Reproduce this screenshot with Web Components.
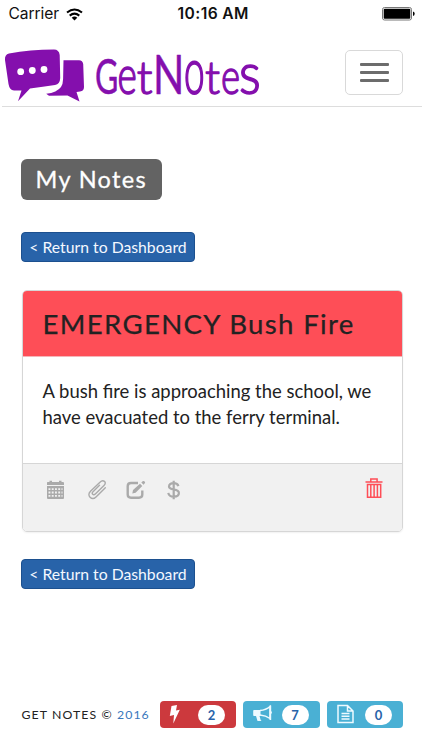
<!DOCTYPE html>
<html lang="en">
<head>
    <meta charset="UTF-8">
    <meta name="viewport" content="width=device-width, initial-scale=1.0">
    <title>GetNotes</title>
    <style>
        :root {
            --purple: #840fad;
            --blue: #2863a9;
            --red: #fe4e57;
            --border: #d6d6d6;
        }
        body {
            margin: 0;
            background: #fff;
            color: #222;
            font-family: Lato, "Liberation Sans", sans-serif;
        }
    </style>
</head>
<body>
    <notes-app></notes-app>

    <template id="status-bar">
        <style>
            :host {
                display: grid;
                grid-template-columns: 1fr auto 1fr;
                align-items: center;
                height: 28px;
                padding: 0 7px 0 8.500px;
                color: #111;
                font: 15.6px/28px Inter, "Liberation Sans", sans-serif;
            }
            .carrier { display: flex; align-items: center; gap: 7px; }
            .name { letter-spacing: -.1px; }
            .time { font-weight: 600; letter-spacing: .4px; position: relative; left: 1.500px; }
            .battery { justify-self: end; }
            svg { display: block; }
        </style>
        <div class="carrier">
            <span class="name"><slot></slot></span>
            <svg width="17" height="13" viewBox="0 0 17 13" fill="none" stroke="#000" stroke-width="2">
                <path d="M1 4.6Q8.500-1.700 16 4.600M3.700 7.600Q8.500 3.700 13.300 7.600"/>
                <path d="M5.700 9.700Q8.500 7.500 11.300 9.700L8.500 12.600Z" fill="#000" stroke="none"/>
            </svg>
        </div>
        <span class="time"><slot name="time"></slot></span>
        <svg class="battery" width="33" height="14" viewBox="0 0 33 14">
            <rect x=".5" y=".5" width="29" height="12.500" rx="2" fill="#fff" stroke="#777"/>
            <rect x="1.700" y="1.700" width="26.600" height="10.100" rx="1"/>
            <path d="M31 4.500q1.700.5 1.700 2.300T31 9.100Z"/>
        </svg>
    </template>

    <template id="brand-logo">
        <style>
            :host { display: block; }
            svg { display: block; overflow: visible; }
            text {
                font: 50px Lato, "Liberation Sans", sans-serif;
                fill: var(--purple);
                stroke: var(--purple);
                stroke-width: .5;
                stroke-linejoin: round;
            }
            text.thin { font-weight: 300; stroke-width: 1.500; }
        </style>
        <svg width="264" height="62" viewBox="0 44 264 62">
            <g fill="#840fad">
                <path d="M9 53.500Q30 49.500 54 49.500Q59 49.500 59.700 55L60.200 78Q60 84 55 85Q43 86.500 30 88.500L18 101.300L21.500 90.500L14 90.500Q9.500 90 8.500 84L5 60Q4.500 54.500 9 53.500Z"/>
                <path d="M63.500 60.300L79 60.300Q82.700 60.500 83.200 64L84 87Q84 91 80 91.500L76.500 92L79.500 101.500L67.500 95.500L49 95.800L46.200 93.800Q57 92.500 61 87Q63 84 63.100 79Z"/>
            </g>
            <g fill="#fff">
                <circle cx="20.700" cy="71.700" r="3.400"/>
                <circle cx="32.300" cy="70.500" r="3.400"/>
                <circle cx="44" cy="69.500" r="3.400"/>
            </g>
            <g id="word"></g>
        </svg>
    </template>

    <template id="menu-toggle">
        <style>
            :host { display: block; }
            button {
                display: flex;
                flex-direction: column;
                align-items: center;
                justify-content: center;
                gap: 5.400px;
                box-sizing: border-box;
                width: 58px;
                height: 45px;
                padding: 0;
                background: #fff;
                border: 1.500px solid #d9d9d9;
                border-radius: 5px;
            }
            i { width: 29px; height: 2.600px; border-radius: 1px; background: #6c6c6c; }
        </style>
        <button aria-label="Menu"><i></i><i></i><i></i></button>
    </template>

    <template id="link-button">
        <style>
            :host { display: block; }
            a {
                display: block;
                box-sizing: border-box;
                width: 174px;
                height: 30px;
                border: 1px solid #1c508f;
                border-radius: 4px;
                background: var(--blue);
                color: #f4f8ff;
                font-size: 15.750px;
                line-height: 28px;
                text-align: center;
                white-space: nowrap;
            }
        </style>
        <a><slot></slot></a>
    </template>

    <template id="note-card">
        <style>
            :host {
                display: block;
                box-sizing: border-box;
                width: 381px;
                border: 1.500px solid var(--border);
                border-radius: 5px;
                overflow: hidden;
                box-shadow: 0 1px 2px rgba(0, 0, 0, .06);
            }
            header {
                box-sizing: border-box;
                height: 66px;
                padding: 0 19.500px;
                background: var(--red);
                border-bottom: 1px solid #f5b5b8;
                font-size: 27.600px;
                line-height: 66px;
                letter-spacing: 1.330px;
                white-space: nowrap;
                -webkit-text-stroke: .25px #222;
            }
            .body {
                box-sizing: border-box;
                height: 106px;
                padding: 21px 19px 0 19.500px;
                font-size: 18.450px;
                line-height: 26.400px;
            }
            footer {
                display: flex;
                box-sizing: border-box;
                height: 68px;
                padding: 13px 19px 0 22px;
                background: #f1f1f1;
                border-top: 1.500px solid var(--border);
            }
            svg { display: block; fill: none; stroke: #aaa; }
            .tools { display: flex; gap: 18px; flex: 1; }
            .tools svg { margin-top: 3px; }
        </style>
        <header><slot name="title"></slot></header>
        <div class="body"><slot></slot></div>
        <footer>
            <div class="tools">
                <svg width="21" height="20" viewBox="0 0 21 20" stroke="none">
                    <path fill="#aaa" stroke="none" d="M2.500 2h2V.8h2.500V2h7V.8h2.500V2h1.500q1 0 1 1v2H2V3q0-1 .5-1ZM2 6h17V18q0 1-1 1h-15q-1 0-1-1Z"/>
                    <path stroke="#f1f1f1" stroke-width="1.900" stroke-dasharray="1.900 1.350" d="M3.500 9.100H17.500M3.500 12.500H17.500M3.500 15.900H17.500"/>
                </svg>
                <svg width="21" height="20" viewBox="0 0 21 20" stroke-width="1.400" stroke-linecap="round" style="margin-left: 3px">
                    <path d="M12.500 5.300L6 11.700c-1.900 1.900.4 4.200 2.300 2.300L17 5.500c3.500-3.500-1-6.300-3.800-3.500L3.500 11.200c-4.500 4.500 1.500 9.700 5.500 5.700L18.300 7.800"/>
                </svg>
                <svg width="20" height="20" viewBox="0 0 20 20" stroke-width="2.400" style="margin-left: -.5px">
                    <path d="M12 3H5Q1.700 3 1.700 6.200v8.300q0 3.200 3.300 3.200h8q3.300 0 3.300-3.200V10.500"/>
                    <path stroke="none" fill="#aaa" d="M6.300 13.500L7 10L14 3.700L16.300 6L9.600 12.700ZM15.300 2.600L17 1q.7-.3 1.300.3l.7.800q.3.600-.2 1.100L17.500 4.800Z"/>
                </svg>
                <svg width="15" height="20" viewBox="0 0 15 20" stroke-width="2.200" style="margin-left: 2px">
                    <path d="M12.400 6.100C11.800 3.900 10 3.200 7.600 3.200C4.900 3.200 3 4.300 3 6.400C3 11 12.900 7.700 12.900 13C12.900 15.500 10.700 16.600 7.800 16.600C4.700 16.600 2.700 15.300 2.300 12.800M7.700.7v18.500"/>
                </svg>
            </div>
            <svg width="18" height="22" viewBox="0 0 18 22" style="stroke: var(--red)" stroke-width="1.500">
                <path d="M.5 5h17M5.800 4.700V2h6.300V4.700M2.500 7.400h13.200v12.800H2.500ZM5.800 8v12.200M9.100 8v12.200M12.400 8v12.200"/>
            </svg>
        </footer>
    </template>

    <template id="count-badge">
        <style>
            :host {
                display: flex;
                align-items: center;
                justify-content: space-between;
                box-sizing: border-box;
                width: 76.500px;
                height: 27px;
                padding: 0 11px 0 9px;
                border-radius: 4px;
                background: #4ab0d4;
            }
            :host([type="alert"]) { background: #cc393d; }
            svg { display: block; fill: none; stroke: #eefaff; stroke-width: 1.500; margin-top: -2px; }
            span {
                width: 27px;
                height: 20px;
                border-radius: 10px;
                background: #fff;
                color: var(--blue);
                font-size: 13px;
                font-weight: 700;
                line-height: 20px;
                text-align: center;
            }
        </style>
        <svg width="21" height="20" viewBox="0 0 21 20"></svg>
        <span><slot></slot></span>
    </template>

    <template id="notes-app">
        <style>
            :host { display: flex; flex-direction: column; height: 750px; }
            nav {
                display: flex;
                justify-content: space-between;
                box-sizing: border-box;
                height: 79px;
                margin-left: 2px;
                padding-right: 19px;
                border-bottom: 1.500px solid #ddd;
            }
            brand-logo { margin: 16px 0 0 -2px; }
            menu-toggle { margin-top: 22px; }
            main { display: flex; flex-direction: column; flex: 1; align-items: flex-start; padding: 52px 0 0 21px; }
            h1 {
                box-sizing: border-box;
                width: 141px;
                height: 41px;
                margin: 0 0 32px;
                padding-left: 14.500px;
                border-radius: 6px;
                background: #636363;
                color: #fff;
                font-size: 23.500px;
                font-weight: 400;
                line-height: 41px;
                letter-spacing: 1.350px;
                white-space: nowrap;
                -webkit-text-stroke: .3px #fff;
            }
            note-card { margin: 28px 0 27px 1px; }
            .foot { display: flex; align-items: center; gap: 7px; height: 27px; padding: 0 19px 22px 21.500px; }
            .copy { flex: 1; font-size: 12.300px; letter-spacing: 1.080px; white-space: nowrap; }
            .copy a { color: #3a78bd; }
        </style>
        <status-bar>Carrier<span slot="time">10:16 AM</span></status-bar>
        <nav>
            <brand-logo></brand-logo>
            <menu-toggle></menu-toggle>
        </nav>
        <main>
            <h1>My Notes</h1>
            <link-button>&lt; Return to Dashboard</link-button>
            <note-card>
                <span slot="title">EMERGENCY Bush Fire</span>
                A bush fire is approaching the school, we have evacuated to the ferry terminal.
            </note-card>
            <link-button>&lt; Return to Dashboard</link-button>
        </main>
        <div class="foot">
            <span class="copy">GET NOTES © <a>2016</a></span>
            <count-badge type="alert">2</count-badge>
            <count-badge type="news">7</count-badge>
            <count-badge type="file">0</count-badge>
        </div>
    </template>

    <script>
        class BaseElement extends HTMLElement {
            constructor() {
                super()
                const shadow = this.attachShadow({mode: 'open'})
                const tpl = document.getElementById(this.localName)
                shadow.appendChild(tpl.content.cloneNode(true))
            }
        }

        class BrandLogo extends BaseElement {
            constructor() {
                super()
                // letter, x, horizontal scale, vertical scale, class
                const letters = [
                    ['G', 95, .64, .96, ''],
                    ['e', 117.5, .74, 1.06, 'thin'],
                    ['t', 136.7, .92, .9, 'thin'],
                    ['N', 153, .82, 1.08, ''],
                    ['o', 184, .74, 1.27, 'thin'],
                    ['t', 205, .88, .9, 'thin'],
                    ['e', 221, .73, 1, 'thin'],
                    ['s', 239, 1.02, 1.13, 'thin']
                ]
                this.shadowRoot.getElementById('word').innerHTML = letters.map(([c, x, sx, sy, cls]) =>
                    `<text class="${cls}" transform="translate(${x} 94) scale(${sx} ${sy})">${c}</text>`).join('')
            }
        }

        const badgeIcons = {
            alert: '<path fill="#fff" stroke="none" d="M2.500 2L8 1L7 6.500L10.800 5.800L4.300 19.500L5 11L.8 12Z"/>',
            news: '<path d="M8 6.500Q14 6 18 2.500V14.500Q14 11.500 8 11"/><path fill="#eefaff" stroke="none" d="M2 6h6.500v6H7.500l1 3.500q.5 1.500 1.500 1.500H5.500L4 12H2q-.8 0-.8-1V7q0-1 .8-1ZM17.500 1.500h1.700V7q1.500 1.300 0 3v6h-1.700Z"/>',
            file: '<path d="M2 1.500h9.500L17 7v11.500H2ZM11.500 1.500V7H17M5.500 9.500h8M5.500 12.300h8M5.500 15.100h8"/>'
        }

        class CountBadge extends BaseElement {
            connectedCallback() {
                const type = this.getAttribute('type')
                this.shadowRoot.querySelector('svg').innerHTML = badgeIcons[type] || ''
            }
        }

        customElements.define('status-bar', class extends BaseElement {})
        customElements.define('brand-logo', BrandLogo)
        customElements.define('menu-toggle', class extends BaseElement {})
        customElements.define('link-button', class extends BaseElement {})
        customElements.define('note-card', class extends BaseElement {})
        customElements.define('count-badge', CountBadge)
        customElements.define('notes-app', class extends BaseElement {})
    </script>
</body>
</html>
